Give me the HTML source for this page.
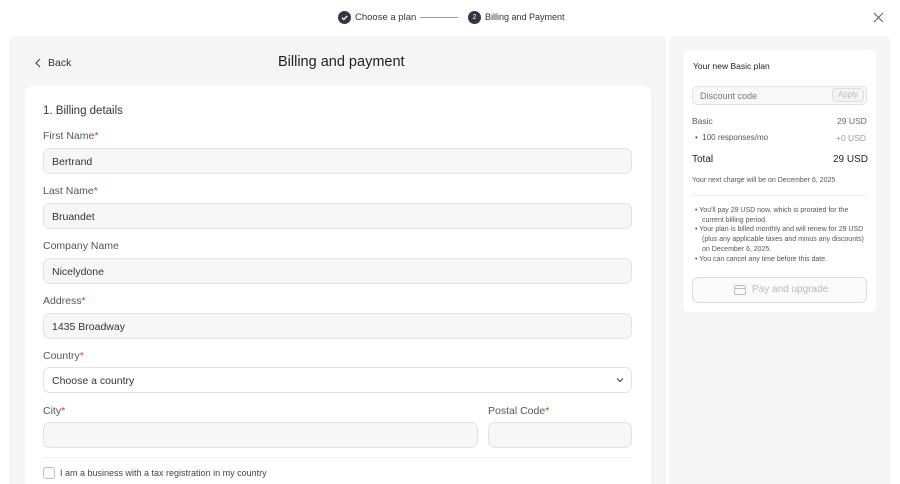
<!DOCTYPE html>
<html style="width:900px;height:484px;overflow:hidden"><head><style>
*{box-sizing:border-box;margin:0;padding:0}
body{width:900px;height:484px;overflow:hidden;background:#fff;font-family:"Liberation Sans",sans-serif;color:#333;position:relative}
.a{position:absolute}
.lbl{position:absolute;left:43px;font-size:10.5px;color:#555}
.lbl b{color:#d33;font-weight:normal}
.in{position:absolute;left:43px;width:589px;height:26px;border:1px solid #e2e2e2;border-radius:7px;background:#f7f7f7;font-size:10.5px;color:#333;padding:7px 0 0 8px}
.sm{font-size:8px;color:#555}
</style></head><body>
<div class="a" style="left:338px;top:11px;width:13px;height:13px;border-radius:50%;background:#3b3340"></div>
<svg class="a" style="left:338px;top:11px" width="13" height="13"><path d="M4 6.7l1.8 1.8L9.2 5" stroke="#fff" stroke-width="1.3" fill="none"/></svg>
<div class="a" style="left:355px;top:12px;font-size:9.5px;color:#333">Choose a plan</div>
<div class="a" style="left:420px;top:17px;width:38px;height:1px;background:#999"></div>
<div class="a" style="left:468px;top:11px;width:13px;height:13px;border-radius:50%;background:#3b3340;color:#fff;font-size:7px;text-align:center;line-height:13px">2</div>
<div class="a" style="left:485px;top:12px;font-size:9px;color:#333">Billing and Payment</div>
<svg class="a" style="left:873px;top:12px" width="11" height="11"><path d="M1 1L10 10M10 1L1 10" stroke="#666" stroke-width="1.1"/></svg>
<div class="a" style="left:9px;top:36px;width:657px;height:460px;background:#f5f5f5;border-radius:6px"></div>
<svg class="a" style="left:34px;top:58px" width="8" height="10"><path d="M6 1L2 5l4 4" stroke="#444" stroke-width="1.1" fill="none"/></svg>
<div class="a" style="left:48px;top:57px;font-size:10.5px;color:#333">Back</div>
<div class="a" style="left:278px;top:54px;font-size:14.5px;color:#222">Billing and payment</div>
<div class="a" style="left:25px;top:86px;width:626px;height:420px;background:#fff;border-radius:8px"></div>
<div class="a" style="left:43px;top:105px;font-size:11.5px;color:#333">1. Billing details</div>
<div class="lbl" style="top:130px">First Name<b>*</b></div>
<div class="in" style="top:148px">Bertrand</div>
<div class="lbl" style="top:185px">Last Name<b>*</b></div>
<div class="in" style="top:203px">Bruandet</div>
<div class="lbl" style="top:240px">Company Name</div>
<div class="in" style="top:258px">Nicelydone</div>
<div class="lbl" style="top:295px">Address<b>*</b></div>
<div class="in" style="top:313px">1435 Broadway</div>
<div class="lbl" style="top:350px">Country<b>*</b></div>
<div class="in" style="top:367px;background:#fff">Choose a country</div>
<svg class="a" style="left:616px;top:377px" width="8" height="6"><path d="M1 1.5l3 3 3-3" stroke="#444" stroke-width="1.1" fill="none"/></svg>
<div class="lbl" style="top:405px">City<b>*</b></div>
<div class="in" style="top:422px;width:435px"></div>
<div class="lbl" style="top:405px;left:488px">Postal Code<b>*</b></div>
<div class="in" style="top:422px;left:488px;width:144px"></div>
<div class="a" style="left:43px;top:457px;width:589px;height:1px;background:#eee"></div>
<div class="a" style="left:43px;top:467px;width:12px;height:12px;border:1px solid #bbb;border-radius:3px"></div>
<div class="a" style="left:60px;top:468px;font-size:9px;color:#444">I am a business with a tax registration in my country</div>
<div class="a" style="left:669px;top:36px;width:221px;height:460px;background:#f5f5f5;border-radius:6px"></div>
<div class="a" style="left:683px;top:50px;width:193px;height:262px;background:#fff;border-radius:6px"></div>
<div class="a" style="left:693px;top:61px;font-size:8.5px;color:#222">Your new Basic plan</div>
<div class="a" style="left:692px;top:86px;width:175px;height:19px;border:1px solid #e2e2e2;border-radius:5px;background:#f8f8f8"></div>
<div class="a" style="left:700px;top:91px;font-size:9px;color:#777">Discount code</div>
<div class="a" style="left:832px;top:88px;width:32px;height:14px;border:1px solid #ddd;border-radius:4px;background:#f3f3f3;font-size:8px;color:#bbb;text-align:center;line-height:12px">Apply</div>
<div class="a" style="left:692px;top:116px;font-size:8.5px;color:#555">Basic</div>
<div class="a" style="left:837px;top:116px;font-size:8.5px;color:#666">29 USD</div>
<div class="a sm" style="left:695px;top:133px">•&nbsp; 100 responses/mo</div>
<div class="a" style="left:836px;top:133px;font-size:8.5px;color:#999">+0 USD</div>
<div class="a" style="left:692px;top:154px;font-size:10px;color:#222">Total</div>
<div class="a" style="left:833px;top:154px;font-size:10px;color:#222">29 USD</div>
<div class="a" style="left:692px;top:177px;font-size:7px;color:#555">Your next charge will be on December 6, 2025</div>
<div class="a" style="left:692px;top:195px;width:175px;height:1px;background:#eee"></div>
<div class="a" style="left:692px;top:206px;width:175px;font-size:7px;line-height:9.7px;color:#555">
<div style="padding-left:10px;text-indent:-7px">• You'll pay 29 USD now, which is prorated for the current billing period.</div>
<div style="padding-left:10px;text-indent:-7px">• Your plan is billed monthly and will renew for 29 USD (plus any applicable taxes and minus any discounts) on December 6, 2025.</div>
<div style="padding-left:10px;text-indent:-7px">• You can cancel any time before this date.</div>
</div>
<div class="a" style="left:692px;top:277px;width:175px;height:26px;border:1px solid #ddd;border-radius:6px;background:#fafafa"></div>
<svg class="a" style="left:734px;top:285px" width="12" height="10"><rect x="0.5" y="0.5" width="11" height="9" rx="1.5" stroke="#bbb" fill="none"/><path d="M0.5 3.5h11" stroke="#bbb"/></svg>
<div class="a" style="left:752px;top:284px;font-size:10px;color:#bbb">Pay and upgrade</div>
</body></html>
